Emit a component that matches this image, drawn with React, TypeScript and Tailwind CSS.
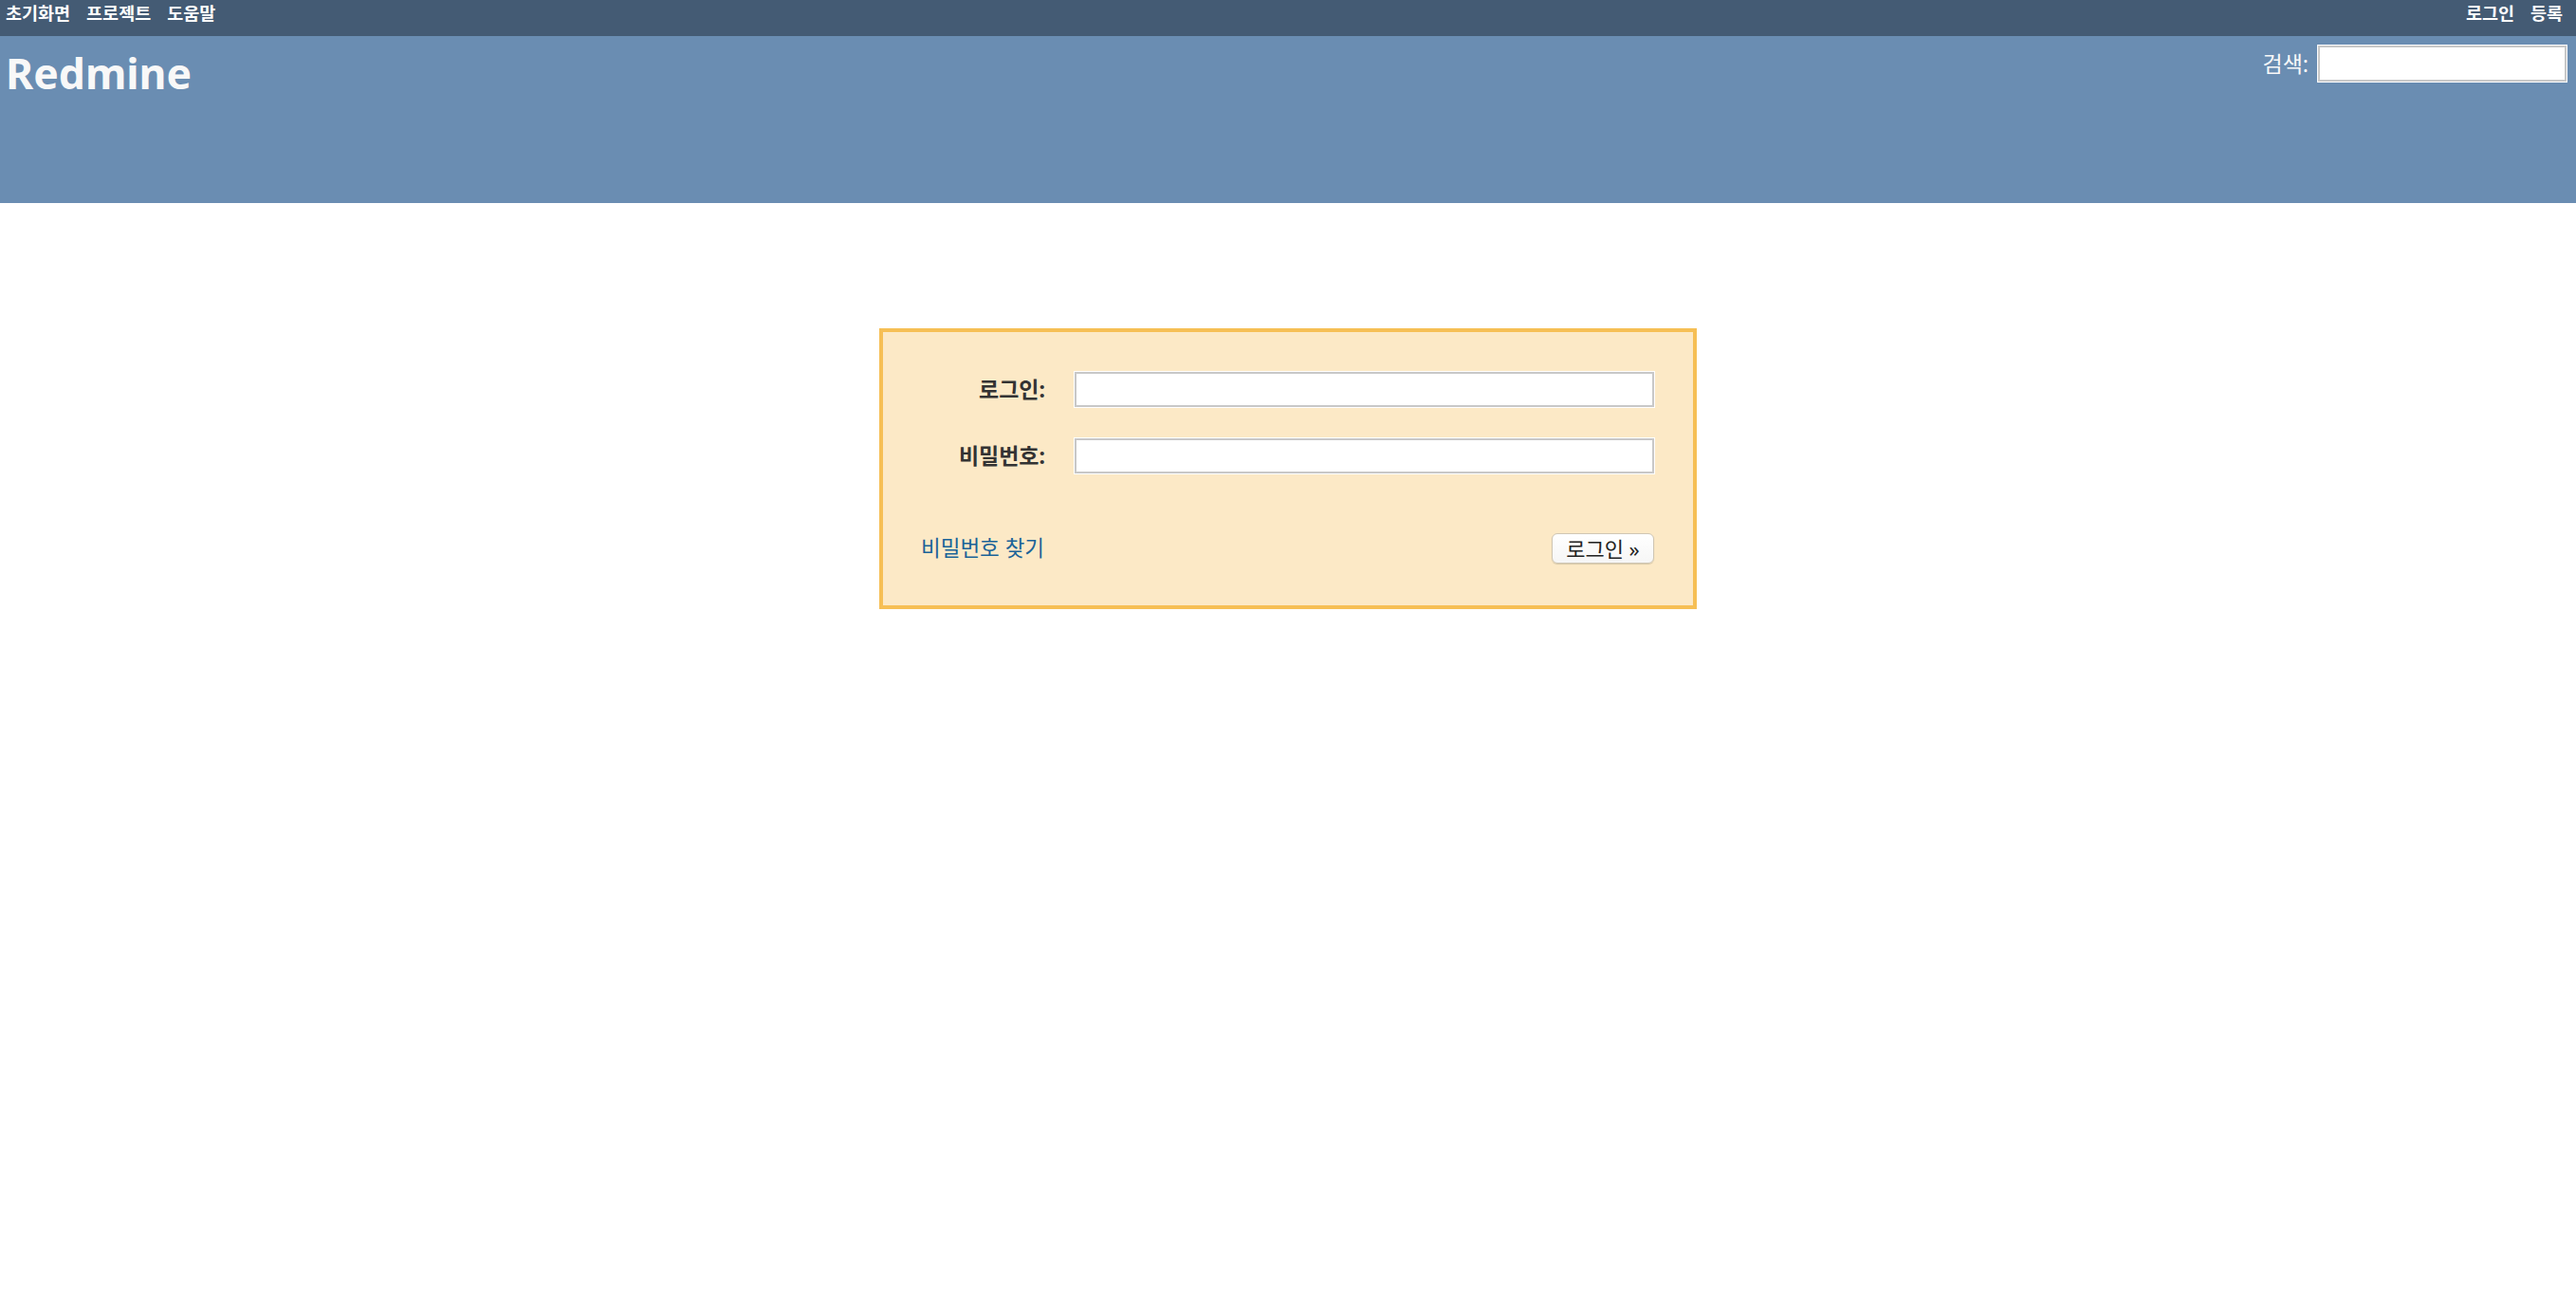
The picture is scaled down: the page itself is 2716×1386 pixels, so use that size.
import React from "react";

const FONT = { fontFamily: '"Noto Sans", "Noto Sans CJK KR", sans-serif' };

export default function App() {
  return (
    <div className="min-h-[1386px] bg-white" style={FONT}>
      {/* top menu */}
      <div className="h-[38px] bg-[#445b74] flex justify-between items-start pl-[6px] pr-[14px] pt-[1px]">
        <div className="flex gap-[17px] text-[18.5px] leading-[26px] font-bold text-white">
          <a>초기화면</a>
          <a>프로젝트</a>
          <a>도움말</a>
        </div>
        <div className="flex gap-[17px] text-[18.5px] leading-[26px] font-bold text-white">
          <a>로그인</a>
          <a>등록</a>
        </div>
      </div>
      {/* header */}
      <div className="h-[176px] bg-[#6a8db2] flex justify-between items-start pl-[6px] pr-[10px]">
        <h1 className="text-[44.5px] font-bold text-[#f8f8f8] mt-[9px] leading-[60px]">Redmine</h1>
        <div className="flex items-center gap-[10px] mt-[10px]">
          <label className="text-[23px] text-[#f8f8f8]">검색:</label>
          <div className="w-[262px] h-[38px] bg-white border-2 border-[#c8c8c8] shadow-[0_0_0_1px_#ffffff]" />
        </div>
      </div>
      {/* login form */}
      <div className="flex justify-center pt-[132px]">
        <div className="w-[862px] h-[296px] bg-[#fce9c6] border-4 border-[#f6bf55] pl-[40px] pr-[41px] pt-[42px]">
          <div className="flex items-center">
            <label className="w-[131px] text-right text-[23px] font-bold text-[#333333]">로그인:</label>
            <div className="ml-[31px] flex-1 h-[37px] bg-white border-2 border-[#c8c8c8] shadow-[0_0_0_1px_#ffffff]" />
          </div>
          <div className="flex items-center mt-[33px]">
            <label className="w-[131px] text-right text-[23px] font-bold text-[#333333]">비밀번호:</label>
            <div className="ml-[31px] flex-1 h-[37px] bg-white border-2 border-[#c8c8c8] shadow-[0_0_0_1px_#ffffff]" />
          </div>
          <div className="flex items-center justify-between mt-[62px]">
            <a className="text-[22.5px] text-[#1a6398]">비밀번호 찾기</a>
            <button className="w-[108px] h-[32px] rounded-[6px] border border-[#cfc6b4] bg-gradient-to-b from-white to-[#f6f6f6] shadow-[0_1px_1px_#d8c9a8] text-[22px] text-[#222222] leading-none flex items-center justify-center">
              로그인 »
            </button>
          </div>
        </div>
      </div>
    </div>
  );
}
